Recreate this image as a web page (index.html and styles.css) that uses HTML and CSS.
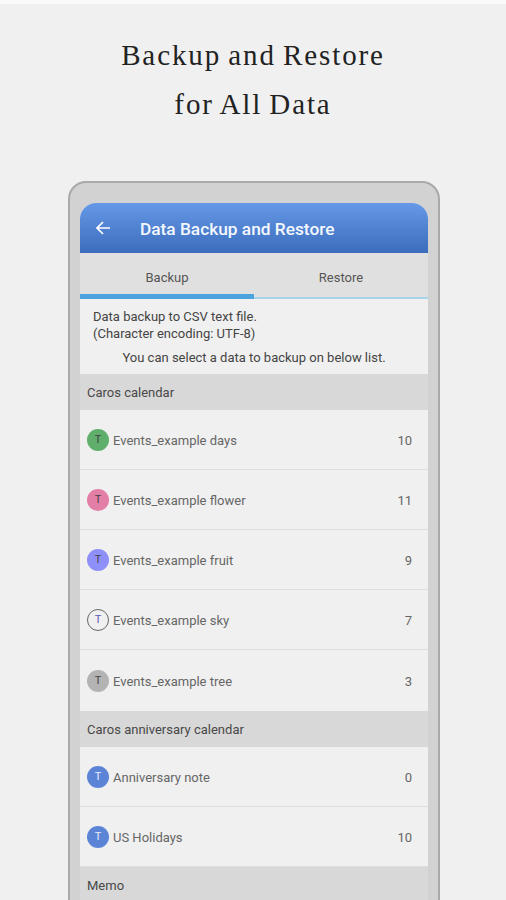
FILE: index.html
```html
<!DOCTYPE html>
<html lang="en">
<head>
    <meta charset="UTF-8">
    <meta name="viewport" content="width=device-width, initial-scale=1.0">
    <title>Backup and Restore</title>
    <link rel="stylesheet" href="styles.css">
</head>
<body>
    <h1 class="headline">Backup and Restore<br>for All Data</h1>

    <div class="phone">
        <div class="screen">
            <div class="app-bar">
                <svg class="back-icon" width="16" height="16" viewBox="0 0 16 16" fill="none" stroke="#fff" stroke-width="1.7">
                    <path d="M15 8H2M8 2L2 8l6 6"/>
                </svg>
                <span class="app-title">Data Backup and Restore</span>
            </div>

            <div class="tabs">
                <div class="tab active">Backup</div>
                <div class="tab">Restore</div>
            </div>

            <div class="info">
                <p>Data backup to CSV text file.<br>(Character encoding: UTF-8)</p>
                <p class="info-center">You can select a data to backup on below list.</p>
            </div>

            <div class="section">Caros calendar</div>
            <div class="row">
                <span class="badge green">T</span>
                <span class="row-name">Events_example days</span>
                <span class="row-count">10</span>
            </div>
            <div class="row">
                <span class="badge pink">T</span>
                <span class="row-name">Events_example flower</span>
                <span class="row-count">11</span>
            </div>
            <div class="row">
                <span class="badge violet">T</span>
                <span class="row-name">Events_example fruit</span>
                <span class="row-count">9</span>
            </div>
            <div class="row">
                <span class="badge outline">T</span>
                <span class="row-name">Events_example sky</span>
                <span class="row-count">7</span>
            </div>
            <div class="row last">
                <span class="badge grey">T</span>
                <span class="row-name">Events_example tree</span>
                <span class="row-count">3</span>
            </div>

            <div class="section">Caros anniversary calendar</div>
            <div class="row">
                <span class="badge blue">T</span>
                <span class="row-name">Anniversary note</span>
                <span class="row-count">0</span>
            </div>
            <div class="row">
                <span class="badge blue">T</span>
                <span class="row-name">US Holidays</span>
                <span class="row-count">10</span>
            </div>

            <div class="section">Memo</div>
        </div>
    </div>
</body>
</html>
```

FILE: styles.css
```css
* {
    margin: 0;
    padding: 0;
    box-sizing: border-box;
}

html, body {
    height: 900px;
    overflow: hidden;
}

body {
    font-family: 'Roboto', sans-serif;
    background: #f0f0f0;
    border-top: 4px solid #fafafa;
    color: #555;
}

.headline {
    height: 177px;
    padding-top: 27px;
    font-family: 'Liberation Serif', serif;
    font-size: 29px;
    font-weight: 400;
    line-height: 49px;
    letter-spacing: 1.9px;
    word-spacing: -2px;
    text-align: center;
    color: #222;
}

.phone {
    width: 372px;
    height: 740px;
    margin-left: 68px;
    padding: 20px 10px 0;
    background: #d2d2d2;
    border: 2px solid #a9a9a9;
    border-radius: 18px 18px 0 0;
}

.screen {
    height: 100%;
    background: #f0f0f0;
    border-radius: 16px 16px 0 0;
    overflow: hidden;
}

.app-bar {
    display: flex;
    align-items: center;
    height: 50px;
    padding-left: 15px;
    background: linear-gradient(#6698e8, #3c6dbd);
    color: #f4f8fd;
}

.app-title {
    margin-left: 29px;
    padding-top: 1px;
    font-size: 17.3px;
    font-weight: 500;
}

.tabs {
    display: flex;
    height: 46px;
    background: #e0e0e0;
    border-bottom: 2px solid #a9d3ec;
}

.tab {
    flex: 1;
    padding-top: 17px;
    font-size: 13px;
    text-align: center;
    color: #555;
}

.tab.active {
    height: 46px;
    border-bottom: 5px solid #4da3dd;
}

.info {
    height: 75px;
    padding: 9px 13px 0;
    font-size: 13px;
    line-height: 17px;
    color: #444;
}

.info-center {
    margin-top: 7px;
    white-space: nowrap;
    text-align: center;
}

.section {
    height: 36px;
    padding: 11px 7px 0;
    background: #d8d8d8;
    font-size: 13px;
    line-height: 15px;
    color: #484848;
}

.row {
    display: flex;
    align-items: center;
    height: 60px;
    padding: 0 16px 0 7px;
    border-bottom: 1px solid #dedede;
    font-size: 13px;
    color: #666;
}

.row.last {
    height: 61px;
    border-bottom: none;
}

.row-name {
    flex: 1;
    margin: 1px 0 0 4px;
}

.row-count {
    margin-top: 1px;
}

.badge {
    display: flex;
    align-items: center;
    justify-content: center;
    width: 22px;
    height: 22px;
    border-radius: 50%;
    font-size: 11px;
    color: #444;
}

.green { background: #5fae6c; }
.pink { background: #e37fa6; }
.violet { background: #8f8ffa; }
.grey { background: #b3b3b3; }

.blue {
    background: #5b84d6;
    color: #e8eefa;
}

.outline {
    border: 1px solid #666;
    color: #5a5ab4;
}
```
